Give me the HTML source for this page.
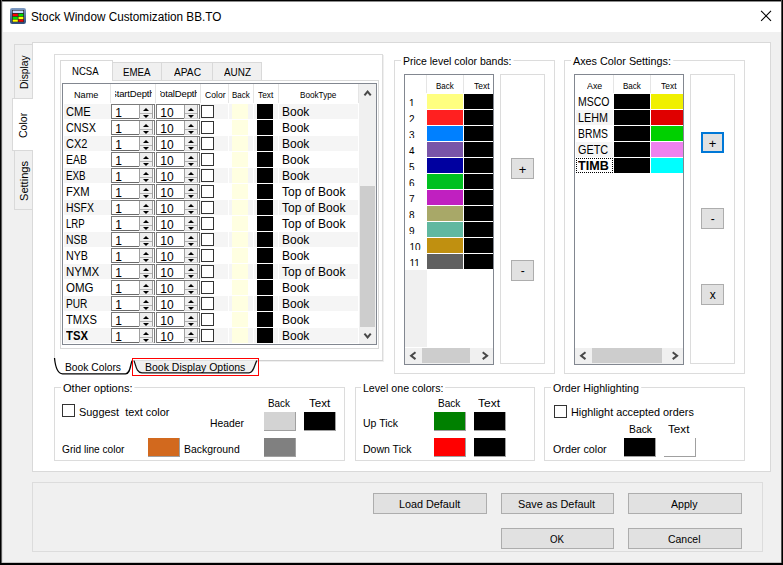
<!DOCTYPE html>
<html><head><meta charset="utf-8"><title>Stock Window Customization BB.TO</title>
<style>
html,body{margin:0;padding:0;}
body{width:783px;height:565px;position:relative;overflow:hidden;background:#f0f0f0;font-family:'Liberation Sans', sans-serif;}
body div, body svg{position:absolute;box-sizing:content-box;}
.t{white-space:pre;}
</style></head><body>
<div style="left:0px;top:0px;width:783px;height:565px;background:#f0f0f0;"></div>
<div style="left:0px;top:1px;width:783px;height:31px;background:#ffffff;"></div>
<div style="left:0px;top:0px;width:783px;height:1px;background:#000;"></div>
<div style="left:0px;top:1px;width:783px;height:1px;background:#8c8c8c;"></div>
<div style="left:0px;top:0px;width:1px;height:565px;background:#000;"></div>
<div style="left:1px;top:0px;width:1px;height:565px;background:#5c5c5c;"></div>
<div style="left:2px;top:2px;width:1px;height:561px;background:#dedede;"></div>
<div style="left:781px;top:0px;width:1px;height:565px;background:#555;"></div>
<div style="left:782px;top:0px;width:1px;height:565px;background:#000;"></div>
<div style="left:0px;top:563px;width:783px;height:2px;background:#000;"></div>
<div style="left:2px;top:562px;width:779px;height:1px;background:#c4c4c4;"></div>
<svg style="left:10px;top:8px" width="16" height="16" viewBox="0 0 16 16">
<defs><linearGradient id="ig" x1="0" y1="0" x2="0" y2="1"><stop offset="0" stop-color="#7f9cc4"/><stop offset="1" stop-color="#2f4f7d"/></linearGradient></defs>
<rect x="0" y="0" width="16" height="16" rx="2.2" fill="url(#ig)"/>
<rect x="2" y="2" width="12" height="12.2" fill="#26282e"/>
<rect x="2.7" y="2.6" width="10.6" height="2.4" fill="#c9d8ff"/>
<rect x="2.7" y="5.8" width="5.1" height="2.4" fill="#ff0000"/><rect x="8.5" y="5.8" width="4.8" height="2.4" fill="#00e000"/>
<rect x="2.7" y="8.8" width="5.1" height="2.4" fill="#00e000"/><rect x="8.5" y="8.8" width="4.8" height="2.4" fill="#ffff00"/>
<rect x="2.7" y="11.6" width="5.1" height="2.1" fill="#ffff00"/><rect x="8.5" y="11.6" width="4.8" height="2.1" fill="#f00000"/>
</svg>
<div class="t" style="left:31.20px;top:10px;font:12.5px/15px 'Liberation Sans', sans-serif;color:#000;white-space:pre;transform-origin:0 0;transform:scaleX(0.9397);">Stock Window Customization BB.TO</div>
<svg style="left:758px;top:8px" width="16" height="16" viewBox="0 0 16 16"><path d="M3.1 2.8 L13 12.9 M13 2.8 L3.1 12.9" stroke="#000" stroke-width="1.1" fill="none"/></svg>
<div style="left:32px;top:42px;width:737px;height:428px;border:1px solid #d9d9d9;background:#fff;"></div>
<div style="left:14px;top:44px;width:17px;height:54px;background:#f0f0f0;border:1px solid #d9d9d9;border-right:none;"></div>
<div style="left:14px;top:150px;width:17px;height:58px;background:#f0f0f0;border:1px solid #d9d9d9;border-right:none;"></div>
<div style="left:12px;top:98px;width:20px;height:51px;background:#fff;border:1px solid #d9d9d9;border-right:none;"></div>
<div class="t" style="left:27.8px;top:89px;transform-origin:0 0;transform:rotate(-90deg) translateY(-10.00px) scaleX(0.9285);font:11px/13px 'Liberation Sans', sans-serif;color:#000;white-space:pre;">Display</div>
<div class="t" style="left:27.2px;top:137.7px;transform-origin:0 0;transform:rotate(-90deg) translateY(-10.00px) scaleX(0.9583);font:11px/13px 'Liberation Sans', sans-serif;color:#000;white-space:pre;">Color</div>
<div class="t" style="left:27.8px;top:201px;transform-origin:0 0;transform:rotate(-90deg) translateY(-10.00px) scaleX(1.0063);font:11px/13px 'Liberation Sans', sans-serif;color:#000;white-space:pre;">Settings</div>
<div style="left:54px;top:54px;width:329px;height:1px;background:#dcdcdc;"></div>
<div style="left:54px;top:54px;width:1px;height:307px;background:#dcdcdc;"></div>
<div style="left:382px;top:54px;width:1px;height:307px;background:#dcdcdc;"></div>
<div style="left:133px;top:360px;width:250px;height:1px;background:#d0d0d0;"></div>
<div style="left:383px;top:55px;width:1px;height:306px;background:#efefef;"></div>
<div style="left:134px;top:361px;width:250px;height:1px;background:#efefef;"></div>
<div style="left:60px;top:80px;width:317px;height:267px;border:1px solid #d9d9d9;"></div>
<div style="left:112px;top:62px;width:49px;height:17px;background:#f0f0f0;border:1px solid #d9d9d9;border-bottom:none;border-left:none;"></div>
<div style="left:162px;top:62px;width:50px;height:17px;background:#f0f0f0;border:1px solid #d9d9d9;border-bottom:none;border-left:none;"></div>
<div style="left:213px;top:62px;width:48px;height:17px;background:#f0f0f0;border:1px solid #d9d9d9;border-bottom:none;border-left:none;"></div>
<div style="left:60px;top:60px;width:51px;height:20px;background:#fff;border:1px solid #d9d9d9;border-bottom:none;"></div>
<div class="t" style="left:71.60px;top:65px;font:11px/13px 'Liberation Sans', sans-serif;color:#000;white-space:pre;transform-origin:0 0;transform:scaleX(0.8703);">NCSA</div>
<div class="t" style="left:122.50px;top:66px;font:11px/13px 'Liberation Sans', sans-serif;color:#000;white-space:pre;transform-origin:0 0;transform:scaleX(0.8818);">EMEA</div>
<div class="t" style="left:173.50px;top:66px;font:11px/13px 'Liberation Sans', sans-serif;color:#000;white-space:pre;transform-origin:0 0;transform:scaleX(0.9265);">APAC</div>
<div class="t" style="left:224.00px;top:66px;font:11px/13px 'Liberation Sans', sans-serif;color:#000;white-space:pre;transform-origin:0 0;transform:scaleX(0.9014);">AUNZ</div>
<div style="left:62px;top:83px;width:313px;height:260px;border:1px solid #828790;background:#fff;"></div>
<div style="left:110px;top:84px;width:1px;height:19px;background:#e5e5e5;"></div>
<div style="left:155px;top:84px;width:1px;height:19px;background:#e5e5e5;"></div>
<div style="left:200px;top:84px;width:1px;height:19px;background:#e5e5e5;"></div>
<div style="left:228px;top:84px;width:1px;height:19px;background:#e5e5e5;"></div>
<div style="left:253px;top:84px;width:1px;height:19px;background:#e5e5e5;"></div>
<div style="left:278px;top:84px;width:1px;height:19px;background:#e5e5e5;"></div>
<div style="left:358px;top:84px;width:1px;height:19px;background:#e5e5e5;"></div>
<div style="left:64px;top:104px;width:294px;height:15px;background:#f5f5f5;"></div>
<div style="left:228px;top:104px;width:1px;height:15px;background:#fff;"></div>
<div style="left:253px;top:104px;width:1px;height:15px;background:#fff;"></div>
<div style="left:278px;top:104px;width:1px;height:15px;background:#fff;"></div>
<div class="t" style="left:66.20px;top:105px;font:12px/14px 'Liberation Sans', sans-serif;color:#000;white-space:pre;transform-origin:0 0;transform:scaleX(0.9261);">CME</div>
<div style="left:111px;top:104px;width:44px;height:15px;background:#fff;"></div>
<div style="left:111px;top:104px;width:44px;height:1px;background:#7a7a7a;"></div>
<div style="left:111px;top:104px;width:1px;height:15px;background:#7a7a7a;"></div>
<div style="left:154px;top:104px;width:1px;height:15px;background:#7a7a7a;"></div>
<div style="left:112px;top:118px;width:27px;height:1px;background:#6a6a6a;"></div>
<div style="left:139px;top:118px;width:15px;height:1px;background:#d4d4d4;"></div>
<div style="left:139px;top:105px;width:12px;height:13px;background:#efefef;border:none;border-left:1px solid #a0a0a0;border-right:1px solid #a0a0a0;"></div>
<div style="left:140px;top:113px;width:12px;height:1px;background:#b4b4b4;"></div>
<div style="left:143px;top:108px;width:0;height:0;border-left:3px solid transparent;border-right:3px solid transparent;border-bottom:3px solid #000;"></div>
<div style="left:143px;top:115px;width:0;height:0;border-left:3px solid transparent;border-right:3px solid transparent;border-top:3px solid #000;"></div>
<div class="t" style="left:115.30px;top:106px;font:12px/14px 'Liberation Sans', sans-serif;color:#000;white-space:pre;">1</div>
<div style="left:156px;top:104px;width:44px;height:15px;background:#fff;"></div>
<div style="left:156px;top:104px;width:44px;height:1px;background:#7a7a7a;"></div>
<div style="left:156px;top:104px;width:1px;height:15px;background:#7a7a7a;"></div>
<div style="left:199px;top:104px;width:1px;height:15px;background:#7a7a7a;"></div>
<div style="left:157px;top:118px;width:27px;height:1px;background:#6a6a6a;"></div>
<div style="left:184px;top:118px;width:15px;height:1px;background:#d4d4d4;"></div>
<div style="left:184px;top:105px;width:12px;height:13px;background:#efefef;border:none;border-left:1px solid #a0a0a0;border-right:1px solid #a0a0a0;"></div>
<div style="left:185px;top:113px;width:12px;height:1px;background:#b4b4b4;"></div>
<div style="left:188px;top:108px;width:0;height:0;border-left:3px solid transparent;border-right:3px solid transparent;border-bottom:3px solid #000;"></div>
<div style="left:188px;top:115px;width:0;height:0;border-left:3px solid transparent;border-right:3px solid transparent;border-top:3px solid #000;"></div>
<div class="t" style="left:160.30px;top:106px;font:12px/14px 'Liberation Sans', sans-serif;color:#000;white-space:pre;">10</div>
<div style="left:201px;top:105px;width:11px;height:11px;background:#fff;border:1px solid #333;"></div>
<div style="left:232px;top:104px;width:16px;height:15px;background:#ffffe1;"></div>
<div style="left:257px;top:104px;width:16px;height:15px;background:#000;"></div>
<div class="t" style="left:282.00px;top:105px;font:12px/14px 'Liberation Sans', sans-serif;color:#000;white-space:pre;">Book</div>
<div class="t" style="left:66.20px;top:121px;font:12px/14px 'Liberation Sans', sans-serif;color:#000;white-space:pre;transform-origin:0 0;transform:scaleX(0.8967);">CNSX</div>
<div style="left:111px;top:120px;width:44px;height:15px;background:#fff;"></div>
<div style="left:111px;top:120px;width:44px;height:1px;background:#7a7a7a;"></div>
<div style="left:111px;top:120px;width:1px;height:15px;background:#7a7a7a;"></div>
<div style="left:154px;top:120px;width:1px;height:15px;background:#7a7a7a;"></div>
<div style="left:112px;top:134px;width:27px;height:1px;background:#6a6a6a;"></div>
<div style="left:139px;top:134px;width:15px;height:1px;background:#d4d4d4;"></div>
<div style="left:139px;top:121px;width:12px;height:13px;background:#efefef;border:none;border-left:1px solid #a0a0a0;border-right:1px solid #a0a0a0;"></div>
<div style="left:140px;top:129px;width:12px;height:1px;background:#b4b4b4;"></div>
<div style="left:143px;top:124px;width:0;height:0;border-left:3px solid transparent;border-right:3px solid transparent;border-bottom:3px solid #000;"></div>
<div style="left:143px;top:131px;width:0;height:0;border-left:3px solid transparent;border-right:3px solid transparent;border-top:3px solid #000;"></div>
<div class="t" style="left:115.30px;top:122px;font:12px/14px 'Liberation Sans', sans-serif;color:#000;white-space:pre;">1</div>
<div style="left:156px;top:120px;width:44px;height:15px;background:#fff;"></div>
<div style="left:156px;top:120px;width:44px;height:1px;background:#7a7a7a;"></div>
<div style="left:156px;top:120px;width:1px;height:15px;background:#7a7a7a;"></div>
<div style="left:199px;top:120px;width:1px;height:15px;background:#7a7a7a;"></div>
<div style="left:157px;top:134px;width:27px;height:1px;background:#6a6a6a;"></div>
<div style="left:184px;top:134px;width:15px;height:1px;background:#d4d4d4;"></div>
<div style="left:184px;top:121px;width:12px;height:13px;background:#efefef;border:none;border-left:1px solid #a0a0a0;border-right:1px solid #a0a0a0;"></div>
<div style="left:185px;top:129px;width:12px;height:1px;background:#b4b4b4;"></div>
<div style="left:188px;top:124px;width:0;height:0;border-left:3px solid transparent;border-right:3px solid transparent;border-bottom:3px solid #000;"></div>
<div style="left:188px;top:131px;width:0;height:0;border-left:3px solid transparent;border-right:3px solid transparent;border-top:3px solid #000;"></div>
<div class="t" style="left:160.30px;top:122px;font:12px/14px 'Liberation Sans', sans-serif;color:#000;white-space:pre;">10</div>
<div style="left:201px;top:121px;width:11px;height:11px;background:#fff;border:1px solid #333;"></div>
<div style="left:232px;top:120px;width:16px;height:15px;background:#ffffe1;"></div>
<div style="left:257px;top:120px;width:16px;height:15px;background:#000;"></div>
<div class="t" style="left:282.00px;top:121px;font:12px/14px 'Liberation Sans', sans-serif;color:#000;white-space:pre;">Book</div>
<div style="left:64px;top:136px;width:294px;height:15px;background:#f5f5f5;"></div>
<div style="left:228px;top:136px;width:1px;height:15px;background:#fff;"></div>
<div style="left:253px;top:136px;width:1px;height:15px;background:#fff;"></div>
<div style="left:278px;top:136px;width:1px;height:15px;background:#fff;"></div>
<div class="t" style="left:66.20px;top:137px;font:12px/14px 'Liberation Sans', sans-serif;color:#000;white-space:pre;transform-origin:0 0;transform:scaleX(0.9167);">CX2</div>
<div style="left:111px;top:136px;width:44px;height:15px;background:#fff;"></div>
<div style="left:111px;top:136px;width:44px;height:1px;background:#7a7a7a;"></div>
<div style="left:111px;top:136px;width:1px;height:15px;background:#7a7a7a;"></div>
<div style="left:154px;top:136px;width:1px;height:15px;background:#7a7a7a;"></div>
<div style="left:112px;top:150px;width:27px;height:1px;background:#6a6a6a;"></div>
<div style="left:139px;top:150px;width:15px;height:1px;background:#d4d4d4;"></div>
<div style="left:139px;top:137px;width:12px;height:13px;background:#efefef;border:none;border-left:1px solid #a0a0a0;border-right:1px solid #a0a0a0;"></div>
<div style="left:140px;top:145px;width:12px;height:1px;background:#b4b4b4;"></div>
<div style="left:143px;top:140px;width:0;height:0;border-left:3px solid transparent;border-right:3px solid transparent;border-bottom:3px solid #000;"></div>
<div style="left:143px;top:147px;width:0;height:0;border-left:3px solid transparent;border-right:3px solid transparent;border-top:3px solid #000;"></div>
<div class="t" style="left:115.30px;top:138px;font:12px/14px 'Liberation Sans', sans-serif;color:#000;white-space:pre;">1</div>
<div style="left:156px;top:136px;width:44px;height:15px;background:#fff;"></div>
<div style="left:156px;top:136px;width:44px;height:1px;background:#7a7a7a;"></div>
<div style="left:156px;top:136px;width:1px;height:15px;background:#7a7a7a;"></div>
<div style="left:199px;top:136px;width:1px;height:15px;background:#7a7a7a;"></div>
<div style="left:157px;top:150px;width:27px;height:1px;background:#6a6a6a;"></div>
<div style="left:184px;top:150px;width:15px;height:1px;background:#d4d4d4;"></div>
<div style="left:184px;top:137px;width:12px;height:13px;background:#efefef;border:none;border-left:1px solid #a0a0a0;border-right:1px solid #a0a0a0;"></div>
<div style="left:185px;top:145px;width:12px;height:1px;background:#b4b4b4;"></div>
<div style="left:188px;top:140px;width:0;height:0;border-left:3px solid transparent;border-right:3px solid transparent;border-bottom:3px solid #000;"></div>
<div style="left:188px;top:147px;width:0;height:0;border-left:3px solid transparent;border-right:3px solid transparent;border-top:3px solid #000;"></div>
<div class="t" style="left:160.30px;top:138px;font:12px/14px 'Liberation Sans', sans-serif;color:#000;white-space:pre;">10</div>
<div style="left:201px;top:137px;width:11px;height:11px;background:#fff;border:1px solid #333;"></div>
<div style="left:232px;top:136px;width:16px;height:15px;background:#ffffe1;"></div>
<div style="left:257px;top:136px;width:16px;height:15px;background:#000;"></div>
<div class="t" style="left:282.00px;top:137px;font:12px/14px 'Liberation Sans', sans-serif;color:#000;white-space:pre;">Book</div>
<div class="t" style="left:66.20px;top:153px;font:12px/14px 'Liberation Sans', sans-serif;color:#000;white-space:pre;transform-origin:0 0;transform:scaleX(0.8744);">EAB</div>
<div style="left:111px;top:152px;width:44px;height:15px;background:#fff;"></div>
<div style="left:111px;top:152px;width:44px;height:1px;background:#7a7a7a;"></div>
<div style="left:111px;top:152px;width:1px;height:15px;background:#7a7a7a;"></div>
<div style="left:154px;top:152px;width:1px;height:15px;background:#7a7a7a;"></div>
<div style="left:112px;top:166px;width:27px;height:1px;background:#6a6a6a;"></div>
<div style="left:139px;top:166px;width:15px;height:1px;background:#d4d4d4;"></div>
<div style="left:139px;top:153px;width:12px;height:13px;background:#efefef;border:none;border-left:1px solid #a0a0a0;border-right:1px solid #a0a0a0;"></div>
<div style="left:140px;top:161px;width:12px;height:1px;background:#b4b4b4;"></div>
<div style="left:143px;top:156px;width:0;height:0;border-left:3px solid transparent;border-right:3px solid transparent;border-bottom:3px solid #000;"></div>
<div style="left:143px;top:163px;width:0;height:0;border-left:3px solid transparent;border-right:3px solid transparent;border-top:3px solid #000;"></div>
<div class="t" style="left:115.30px;top:154px;font:12px/14px 'Liberation Sans', sans-serif;color:#000;white-space:pre;">1</div>
<div style="left:156px;top:152px;width:44px;height:15px;background:#fff;"></div>
<div style="left:156px;top:152px;width:44px;height:1px;background:#7a7a7a;"></div>
<div style="left:156px;top:152px;width:1px;height:15px;background:#7a7a7a;"></div>
<div style="left:199px;top:152px;width:1px;height:15px;background:#7a7a7a;"></div>
<div style="left:157px;top:166px;width:27px;height:1px;background:#6a6a6a;"></div>
<div style="left:184px;top:166px;width:15px;height:1px;background:#d4d4d4;"></div>
<div style="left:184px;top:153px;width:12px;height:13px;background:#efefef;border:none;border-left:1px solid #a0a0a0;border-right:1px solid #a0a0a0;"></div>
<div style="left:185px;top:161px;width:12px;height:1px;background:#b4b4b4;"></div>
<div style="left:188px;top:156px;width:0;height:0;border-left:3px solid transparent;border-right:3px solid transparent;border-bottom:3px solid #000;"></div>
<div style="left:188px;top:163px;width:0;height:0;border-left:3px solid transparent;border-right:3px solid transparent;border-top:3px solid #000;"></div>
<div class="t" style="left:160.30px;top:154px;font:12px/14px 'Liberation Sans', sans-serif;color:#000;white-space:pre;">10</div>
<div style="left:201px;top:153px;width:11px;height:11px;background:#fff;border:1px solid #333;"></div>
<div style="left:232px;top:152px;width:16px;height:15px;background:#ffffe1;"></div>
<div style="left:257px;top:152px;width:16px;height:15px;background:#000;"></div>
<div class="t" style="left:282.00px;top:153px;font:12px/14px 'Liberation Sans', sans-serif;color:#000;white-space:pre;">Book</div>
<div style="left:64px;top:168px;width:294px;height:15px;background:#f5f5f5;"></div>
<div style="left:228px;top:168px;width:1px;height:15px;background:#fff;"></div>
<div style="left:253px;top:168px;width:1px;height:15px;background:#fff;"></div>
<div style="left:278px;top:168px;width:1px;height:15px;background:#fff;"></div>
<div class="t" style="left:66.20px;top:169px;font:12px/14px 'Liberation Sans', sans-serif;color:#000;white-space:pre;transform-origin:0 0;transform:scaleX(0.8161);">EXB</div>
<div style="left:111px;top:168px;width:44px;height:15px;background:#fff;"></div>
<div style="left:111px;top:168px;width:44px;height:1px;background:#7a7a7a;"></div>
<div style="left:111px;top:168px;width:1px;height:15px;background:#7a7a7a;"></div>
<div style="left:154px;top:168px;width:1px;height:15px;background:#7a7a7a;"></div>
<div style="left:112px;top:182px;width:27px;height:1px;background:#6a6a6a;"></div>
<div style="left:139px;top:182px;width:15px;height:1px;background:#d4d4d4;"></div>
<div style="left:139px;top:169px;width:12px;height:13px;background:#efefef;border:none;border-left:1px solid #a0a0a0;border-right:1px solid #a0a0a0;"></div>
<div style="left:140px;top:177px;width:12px;height:1px;background:#b4b4b4;"></div>
<div style="left:143px;top:172px;width:0;height:0;border-left:3px solid transparent;border-right:3px solid transparent;border-bottom:3px solid #000;"></div>
<div style="left:143px;top:179px;width:0;height:0;border-left:3px solid transparent;border-right:3px solid transparent;border-top:3px solid #000;"></div>
<div class="t" style="left:115.30px;top:170px;font:12px/14px 'Liberation Sans', sans-serif;color:#000;white-space:pre;">1</div>
<div style="left:156px;top:168px;width:44px;height:15px;background:#fff;"></div>
<div style="left:156px;top:168px;width:44px;height:1px;background:#7a7a7a;"></div>
<div style="left:156px;top:168px;width:1px;height:15px;background:#7a7a7a;"></div>
<div style="left:199px;top:168px;width:1px;height:15px;background:#7a7a7a;"></div>
<div style="left:157px;top:182px;width:27px;height:1px;background:#6a6a6a;"></div>
<div style="left:184px;top:182px;width:15px;height:1px;background:#d4d4d4;"></div>
<div style="left:184px;top:169px;width:12px;height:13px;background:#efefef;border:none;border-left:1px solid #a0a0a0;border-right:1px solid #a0a0a0;"></div>
<div style="left:185px;top:177px;width:12px;height:1px;background:#b4b4b4;"></div>
<div style="left:188px;top:172px;width:0;height:0;border-left:3px solid transparent;border-right:3px solid transparent;border-bottom:3px solid #000;"></div>
<div style="left:188px;top:179px;width:0;height:0;border-left:3px solid transparent;border-right:3px solid transparent;border-top:3px solid #000;"></div>
<div class="t" style="left:160.30px;top:170px;font:12px/14px 'Liberation Sans', sans-serif;color:#000;white-space:pre;">10</div>
<div style="left:201px;top:169px;width:11px;height:11px;background:#fff;border:1px solid #333;"></div>
<div style="left:232px;top:168px;width:16px;height:15px;background:#ffffe1;"></div>
<div style="left:257px;top:168px;width:16px;height:15px;background:#000;"></div>
<div class="t" style="left:282.00px;top:169px;font:12px/14px 'Liberation Sans', sans-serif;color:#000;white-space:pre;">Book</div>
<div class="t" style="left:66.20px;top:185px;font:12px/14px 'Liberation Sans', sans-serif;color:#000;white-space:pre;transform-origin:0 0;transform:scaleX(0.9351);">FXM</div>
<div style="left:111px;top:184px;width:44px;height:15px;background:#fff;"></div>
<div style="left:111px;top:184px;width:44px;height:1px;background:#7a7a7a;"></div>
<div style="left:111px;top:184px;width:1px;height:15px;background:#7a7a7a;"></div>
<div style="left:154px;top:184px;width:1px;height:15px;background:#7a7a7a;"></div>
<div style="left:112px;top:198px;width:27px;height:1px;background:#6a6a6a;"></div>
<div style="left:139px;top:198px;width:15px;height:1px;background:#d4d4d4;"></div>
<div style="left:139px;top:185px;width:12px;height:13px;background:#efefef;border:none;border-left:1px solid #a0a0a0;border-right:1px solid #a0a0a0;"></div>
<div style="left:140px;top:193px;width:12px;height:1px;background:#b4b4b4;"></div>
<div style="left:143px;top:188px;width:0;height:0;border-left:3px solid transparent;border-right:3px solid transparent;border-bottom:3px solid #000;"></div>
<div style="left:143px;top:195px;width:0;height:0;border-left:3px solid transparent;border-right:3px solid transparent;border-top:3px solid #000;"></div>
<div class="t" style="left:115.30px;top:186px;font:12px/14px 'Liberation Sans', sans-serif;color:#000;white-space:pre;">1</div>
<div style="left:156px;top:184px;width:44px;height:15px;background:#fff;"></div>
<div style="left:156px;top:184px;width:44px;height:1px;background:#7a7a7a;"></div>
<div style="left:156px;top:184px;width:1px;height:15px;background:#7a7a7a;"></div>
<div style="left:199px;top:184px;width:1px;height:15px;background:#7a7a7a;"></div>
<div style="left:157px;top:198px;width:27px;height:1px;background:#6a6a6a;"></div>
<div style="left:184px;top:198px;width:15px;height:1px;background:#d4d4d4;"></div>
<div style="left:184px;top:185px;width:12px;height:13px;background:#efefef;border:none;border-left:1px solid #a0a0a0;border-right:1px solid #a0a0a0;"></div>
<div style="left:185px;top:193px;width:12px;height:1px;background:#b4b4b4;"></div>
<div style="left:188px;top:188px;width:0;height:0;border-left:3px solid transparent;border-right:3px solid transparent;border-bottom:3px solid #000;"></div>
<div style="left:188px;top:195px;width:0;height:0;border-left:3px solid transparent;border-right:3px solid transparent;border-top:3px solid #000;"></div>
<div class="t" style="left:160.30px;top:186px;font:12px/14px 'Liberation Sans', sans-serif;color:#000;white-space:pre;">10</div>
<div style="left:201px;top:185px;width:11px;height:11px;background:#fff;border:1px solid #333;"></div>
<div style="left:232px;top:184px;width:16px;height:15px;background:#ffffe1;"></div>
<div style="left:257px;top:184px;width:16px;height:15px;background:#000;"></div>
<div class="t" style="left:282.00px;top:185px;font:12px/14px 'Liberation Sans', sans-serif;color:#000;white-space:pre;">Top of Book</div>
<div style="left:64px;top:200px;width:294px;height:15px;background:#f5f5f5;"></div>
<div style="left:228px;top:200px;width:1px;height:15px;background:#fff;"></div>
<div style="left:253px;top:200px;width:1px;height:15px;background:#fff;"></div>
<div style="left:278px;top:200px;width:1px;height:15px;background:#fff;"></div>
<div class="t" style="left:66.20px;top:201px;font:12px/14px 'Liberation Sans', sans-serif;color:#000;white-space:pre;transform-origin:0 0;transform:scaleX(0.8714);">HSFX</div>
<div style="left:111px;top:200px;width:44px;height:15px;background:#fff;"></div>
<div style="left:111px;top:200px;width:44px;height:1px;background:#7a7a7a;"></div>
<div style="left:111px;top:200px;width:1px;height:15px;background:#7a7a7a;"></div>
<div style="left:154px;top:200px;width:1px;height:15px;background:#7a7a7a;"></div>
<div style="left:112px;top:214px;width:27px;height:1px;background:#6a6a6a;"></div>
<div style="left:139px;top:214px;width:15px;height:1px;background:#d4d4d4;"></div>
<div style="left:139px;top:201px;width:12px;height:13px;background:#efefef;border:none;border-left:1px solid #a0a0a0;border-right:1px solid #a0a0a0;"></div>
<div style="left:140px;top:209px;width:12px;height:1px;background:#b4b4b4;"></div>
<div style="left:143px;top:204px;width:0;height:0;border-left:3px solid transparent;border-right:3px solid transparent;border-bottom:3px solid #000;"></div>
<div style="left:143px;top:211px;width:0;height:0;border-left:3px solid transparent;border-right:3px solid transparent;border-top:3px solid #000;"></div>
<div class="t" style="left:115.30px;top:202px;font:12px/14px 'Liberation Sans', sans-serif;color:#000;white-space:pre;">1</div>
<div style="left:156px;top:200px;width:44px;height:15px;background:#fff;"></div>
<div style="left:156px;top:200px;width:44px;height:1px;background:#7a7a7a;"></div>
<div style="left:156px;top:200px;width:1px;height:15px;background:#7a7a7a;"></div>
<div style="left:199px;top:200px;width:1px;height:15px;background:#7a7a7a;"></div>
<div style="left:157px;top:214px;width:27px;height:1px;background:#6a6a6a;"></div>
<div style="left:184px;top:214px;width:15px;height:1px;background:#d4d4d4;"></div>
<div style="left:184px;top:201px;width:12px;height:13px;background:#efefef;border:none;border-left:1px solid #a0a0a0;border-right:1px solid #a0a0a0;"></div>
<div style="left:185px;top:209px;width:12px;height:1px;background:#b4b4b4;"></div>
<div style="left:188px;top:204px;width:0;height:0;border-left:3px solid transparent;border-right:3px solid transparent;border-bottom:3px solid #000;"></div>
<div style="left:188px;top:211px;width:0;height:0;border-left:3px solid transparent;border-right:3px solid transparent;border-top:3px solid #000;"></div>
<div class="t" style="left:160.30px;top:202px;font:12px/14px 'Liberation Sans', sans-serif;color:#000;white-space:pre;">10</div>
<div style="left:201px;top:201px;width:11px;height:11px;background:#fff;border:1px solid #333;"></div>
<div style="left:232px;top:200px;width:16px;height:15px;background:#ffffe1;"></div>
<div style="left:257px;top:200px;width:16px;height:15px;background:#000;"></div>
<div class="t" style="left:282.00px;top:201px;font:12px/14px 'Liberation Sans', sans-serif;color:#000;white-space:pre;">Top of Book</div>
<div class="t" style="left:66.20px;top:217px;font:12px/14px 'Liberation Sans', sans-serif;color:#000;white-space:pre;transform-origin:0 0;transform:scaleX(0.8011);">LRP</div>
<div style="left:111px;top:216px;width:44px;height:15px;background:#fff;"></div>
<div style="left:111px;top:216px;width:44px;height:1px;background:#7a7a7a;"></div>
<div style="left:111px;top:216px;width:1px;height:15px;background:#7a7a7a;"></div>
<div style="left:154px;top:216px;width:1px;height:15px;background:#7a7a7a;"></div>
<div style="left:112px;top:230px;width:27px;height:1px;background:#6a6a6a;"></div>
<div style="left:139px;top:230px;width:15px;height:1px;background:#d4d4d4;"></div>
<div style="left:139px;top:217px;width:12px;height:13px;background:#efefef;border:none;border-left:1px solid #a0a0a0;border-right:1px solid #a0a0a0;"></div>
<div style="left:140px;top:225px;width:12px;height:1px;background:#b4b4b4;"></div>
<div style="left:143px;top:220px;width:0;height:0;border-left:3px solid transparent;border-right:3px solid transparent;border-bottom:3px solid #000;"></div>
<div style="left:143px;top:227px;width:0;height:0;border-left:3px solid transparent;border-right:3px solid transparent;border-top:3px solid #000;"></div>
<div class="t" style="left:115.30px;top:218px;font:12px/14px 'Liberation Sans', sans-serif;color:#000;white-space:pre;">1</div>
<div style="left:156px;top:216px;width:44px;height:15px;background:#fff;"></div>
<div style="left:156px;top:216px;width:44px;height:1px;background:#7a7a7a;"></div>
<div style="left:156px;top:216px;width:1px;height:15px;background:#7a7a7a;"></div>
<div style="left:199px;top:216px;width:1px;height:15px;background:#7a7a7a;"></div>
<div style="left:157px;top:230px;width:27px;height:1px;background:#6a6a6a;"></div>
<div style="left:184px;top:230px;width:15px;height:1px;background:#d4d4d4;"></div>
<div style="left:184px;top:217px;width:12px;height:13px;background:#efefef;border:none;border-left:1px solid #a0a0a0;border-right:1px solid #a0a0a0;"></div>
<div style="left:185px;top:225px;width:12px;height:1px;background:#b4b4b4;"></div>
<div style="left:188px;top:220px;width:0;height:0;border-left:3px solid transparent;border-right:3px solid transparent;border-bottom:3px solid #000;"></div>
<div style="left:188px;top:227px;width:0;height:0;border-left:3px solid transparent;border-right:3px solid transparent;border-top:3px solid #000;"></div>
<div class="t" style="left:160.30px;top:218px;font:12px/14px 'Liberation Sans', sans-serif;color:#000;white-space:pre;">10</div>
<div style="left:201px;top:217px;width:11px;height:11px;background:#fff;border:1px solid #333;"></div>
<div style="left:232px;top:216px;width:16px;height:15px;background:#ffffe1;"></div>
<div style="left:257px;top:216px;width:16px;height:15px;background:#000;"></div>
<div class="t" style="left:282.00px;top:217px;font:12px/14px 'Liberation Sans', sans-serif;color:#000;white-space:pre;">Top of Book</div>
<div style="left:64px;top:232px;width:294px;height:15px;background:#f5f5f5;"></div>
<div style="left:228px;top:232px;width:1px;height:15px;background:#fff;"></div>
<div style="left:253px;top:232px;width:1px;height:15px;background:#fff;"></div>
<div style="left:278px;top:232px;width:1px;height:15px;background:#fff;"></div>
<div class="t" style="left:66.20px;top:233px;font:12px/14px 'Liberation Sans', sans-serif;color:#000;white-space:pre;transform-origin:0 0;transform:scaleX(0.8668);">NSB</div>
<div style="left:111px;top:232px;width:44px;height:15px;background:#fff;"></div>
<div style="left:111px;top:232px;width:44px;height:1px;background:#7a7a7a;"></div>
<div style="left:111px;top:232px;width:1px;height:15px;background:#7a7a7a;"></div>
<div style="left:154px;top:232px;width:1px;height:15px;background:#7a7a7a;"></div>
<div style="left:112px;top:246px;width:27px;height:1px;background:#6a6a6a;"></div>
<div style="left:139px;top:246px;width:15px;height:1px;background:#d4d4d4;"></div>
<div style="left:139px;top:233px;width:12px;height:13px;background:#efefef;border:none;border-left:1px solid #a0a0a0;border-right:1px solid #a0a0a0;"></div>
<div style="left:140px;top:241px;width:12px;height:1px;background:#b4b4b4;"></div>
<div style="left:143px;top:236px;width:0;height:0;border-left:3px solid transparent;border-right:3px solid transparent;border-bottom:3px solid #000;"></div>
<div style="left:143px;top:243px;width:0;height:0;border-left:3px solid transparent;border-right:3px solid transparent;border-top:3px solid #000;"></div>
<div class="t" style="left:115.30px;top:234px;font:12px/14px 'Liberation Sans', sans-serif;color:#000;white-space:pre;">1</div>
<div style="left:156px;top:232px;width:44px;height:15px;background:#fff;"></div>
<div style="left:156px;top:232px;width:44px;height:1px;background:#7a7a7a;"></div>
<div style="left:156px;top:232px;width:1px;height:15px;background:#7a7a7a;"></div>
<div style="left:199px;top:232px;width:1px;height:15px;background:#7a7a7a;"></div>
<div style="left:157px;top:246px;width:27px;height:1px;background:#6a6a6a;"></div>
<div style="left:184px;top:246px;width:15px;height:1px;background:#d4d4d4;"></div>
<div style="left:184px;top:233px;width:12px;height:13px;background:#efefef;border:none;border-left:1px solid #a0a0a0;border-right:1px solid #a0a0a0;"></div>
<div style="left:185px;top:241px;width:12px;height:1px;background:#b4b4b4;"></div>
<div style="left:188px;top:236px;width:0;height:0;border-left:3px solid transparent;border-right:3px solid transparent;border-bottom:3px solid #000;"></div>
<div style="left:188px;top:243px;width:0;height:0;border-left:3px solid transparent;border-right:3px solid transparent;border-top:3px solid #000;"></div>
<div class="t" style="left:160.30px;top:234px;font:12px/14px 'Liberation Sans', sans-serif;color:#000;white-space:pre;">10</div>
<div style="left:201px;top:233px;width:11px;height:11px;background:#fff;border:1px solid #333;"></div>
<div style="left:232px;top:232px;width:16px;height:15px;background:#ffffe1;"></div>
<div style="left:257px;top:232px;width:16px;height:15px;background:#000;"></div>
<div class="t" style="left:282.00px;top:233px;font:12px/14px 'Liberation Sans', sans-serif;color:#000;white-space:pre;">Book</div>
<div class="t" style="left:66.20px;top:249px;font:12px/14px 'Liberation Sans', sans-serif;color:#000;white-space:pre;transform-origin:0 0;transform:scaleX(0.8911);">NYB</div>
<div style="left:111px;top:248px;width:44px;height:15px;background:#fff;"></div>
<div style="left:111px;top:248px;width:44px;height:1px;background:#7a7a7a;"></div>
<div style="left:111px;top:248px;width:1px;height:15px;background:#7a7a7a;"></div>
<div style="left:154px;top:248px;width:1px;height:15px;background:#7a7a7a;"></div>
<div style="left:112px;top:262px;width:27px;height:1px;background:#6a6a6a;"></div>
<div style="left:139px;top:262px;width:15px;height:1px;background:#d4d4d4;"></div>
<div style="left:139px;top:249px;width:12px;height:13px;background:#efefef;border:none;border-left:1px solid #a0a0a0;border-right:1px solid #a0a0a0;"></div>
<div style="left:140px;top:257px;width:12px;height:1px;background:#b4b4b4;"></div>
<div style="left:143px;top:252px;width:0;height:0;border-left:3px solid transparent;border-right:3px solid transparent;border-bottom:3px solid #000;"></div>
<div style="left:143px;top:259px;width:0;height:0;border-left:3px solid transparent;border-right:3px solid transparent;border-top:3px solid #000;"></div>
<div class="t" style="left:115.30px;top:250px;font:12px/14px 'Liberation Sans', sans-serif;color:#000;white-space:pre;">1</div>
<div style="left:156px;top:248px;width:44px;height:15px;background:#fff;"></div>
<div style="left:156px;top:248px;width:44px;height:1px;background:#7a7a7a;"></div>
<div style="left:156px;top:248px;width:1px;height:15px;background:#7a7a7a;"></div>
<div style="left:199px;top:248px;width:1px;height:15px;background:#7a7a7a;"></div>
<div style="left:157px;top:262px;width:27px;height:1px;background:#6a6a6a;"></div>
<div style="left:184px;top:262px;width:15px;height:1px;background:#d4d4d4;"></div>
<div style="left:184px;top:249px;width:12px;height:13px;background:#efefef;border:none;border-left:1px solid #a0a0a0;border-right:1px solid #a0a0a0;"></div>
<div style="left:185px;top:257px;width:12px;height:1px;background:#b4b4b4;"></div>
<div style="left:188px;top:252px;width:0;height:0;border-left:3px solid transparent;border-right:3px solid transparent;border-bottom:3px solid #000;"></div>
<div style="left:188px;top:259px;width:0;height:0;border-left:3px solid transparent;border-right:3px solid transparent;border-top:3px solid #000;"></div>
<div class="t" style="left:160.30px;top:250px;font:12px/14px 'Liberation Sans', sans-serif;color:#000;white-space:pre;">10</div>
<div style="left:201px;top:249px;width:11px;height:11px;background:#fff;border:1px solid #333;"></div>
<div style="left:232px;top:248px;width:16px;height:15px;background:#ffffe1;"></div>
<div style="left:257px;top:248px;width:16px;height:15px;background:#000;"></div>
<div class="t" style="left:282.00px;top:249px;font:12px/14px 'Liberation Sans', sans-serif;color:#000;white-space:pre;">Book</div>
<div style="left:64px;top:264px;width:294px;height:15px;background:#f5f5f5;"></div>
<div style="left:228px;top:264px;width:1px;height:15px;background:#fff;"></div>
<div style="left:253px;top:264px;width:1px;height:15px;background:#fff;"></div>
<div style="left:278px;top:264px;width:1px;height:15px;background:#fff;"></div>
<div class="t" style="left:66.20px;top:265px;font:12px/14px 'Liberation Sans', sans-serif;color:#000;white-space:pre;transform-origin:0 0;transform:scaleX(0.9547);">NYMX</div>
<div style="left:111px;top:264px;width:44px;height:15px;background:#fff;"></div>
<div style="left:111px;top:264px;width:44px;height:1px;background:#7a7a7a;"></div>
<div style="left:111px;top:264px;width:1px;height:15px;background:#7a7a7a;"></div>
<div style="left:154px;top:264px;width:1px;height:15px;background:#7a7a7a;"></div>
<div style="left:112px;top:278px;width:27px;height:1px;background:#6a6a6a;"></div>
<div style="left:139px;top:278px;width:15px;height:1px;background:#d4d4d4;"></div>
<div style="left:139px;top:265px;width:12px;height:13px;background:#efefef;border:none;border-left:1px solid #a0a0a0;border-right:1px solid #a0a0a0;"></div>
<div style="left:140px;top:273px;width:12px;height:1px;background:#b4b4b4;"></div>
<div style="left:143px;top:268px;width:0;height:0;border-left:3px solid transparent;border-right:3px solid transparent;border-bottom:3px solid #000;"></div>
<div style="left:143px;top:275px;width:0;height:0;border-left:3px solid transparent;border-right:3px solid transparent;border-top:3px solid #000;"></div>
<div class="t" style="left:115.30px;top:266px;font:12px/14px 'Liberation Sans', sans-serif;color:#000;white-space:pre;">1</div>
<div style="left:156px;top:264px;width:44px;height:15px;background:#fff;"></div>
<div style="left:156px;top:264px;width:44px;height:1px;background:#7a7a7a;"></div>
<div style="left:156px;top:264px;width:1px;height:15px;background:#7a7a7a;"></div>
<div style="left:199px;top:264px;width:1px;height:15px;background:#7a7a7a;"></div>
<div style="left:157px;top:278px;width:27px;height:1px;background:#6a6a6a;"></div>
<div style="left:184px;top:278px;width:15px;height:1px;background:#d4d4d4;"></div>
<div style="left:184px;top:265px;width:12px;height:13px;background:#efefef;border:none;border-left:1px solid #a0a0a0;border-right:1px solid #a0a0a0;"></div>
<div style="left:185px;top:273px;width:12px;height:1px;background:#b4b4b4;"></div>
<div style="left:188px;top:268px;width:0;height:0;border-left:3px solid transparent;border-right:3px solid transparent;border-bottom:3px solid #000;"></div>
<div style="left:188px;top:275px;width:0;height:0;border-left:3px solid transparent;border-right:3px solid transparent;border-top:3px solid #000;"></div>
<div class="t" style="left:160.30px;top:266px;font:12px/14px 'Liberation Sans', sans-serif;color:#000;white-space:pre;">10</div>
<div style="left:201px;top:265px;width:11px;height:11px;background:#fff;border:1px solid #333;"></div>
<div style="left:232px;top:264px;width:16px;height:15px;background:#ffffe1;"></div>
<div style="left:257px;top:264px;width:16px;height:15px;background:#000;"></div>
<div class="t" style="left:282.00px;top:265px;font:12px/14px 'Liberation Sans', sans-serif;color:#000;white-space:pre;">Top of Book</div>
<div class="t" style="left:66.20px;top:281px;font:12px/14px 'Liberation Sans', sans-serif;color:#000;white-space:pre;transform-origin:0 0;transform:scaleX(0.9591);">OMG</div>
<div style="left:111px;top:280px;width:44px;height:15px;background:#fff;"></div>
<div style="left:111px;top:280px;width:44px;height:1px;background:#7a7a7a;"></div>
<div style="left:111px;top:280px;width:1px;height:15px;background:#7a7a7a;"></div>
<div style="left:154px;top:280px;width:1px;height:15px;background:#7a7a7a;"></div>
<div style="left:112px;top:294px;width:27px;height:1px;background:#6a6a6a;"></div>
<div style="left:139px;top:294px;width:15px;height:1px;background:#d4d4d4;"></div>
<div style="left:139px;top:281px;width:12px;height:13px;background:#efefef;border:none;border-left:1px solid #a0a0a0;border-right:1px solid #a0a0a0;"></div>
<div style="left:140px;top:289px;width:12px;height:1px;background:#b4b4b4;"></div>
<div style="left:143px;top:284px;width:0;height:0;border-left:3px solid transparent;border-right:3px solid transparent;border-bottom:3px solid #000;"></div>
<div style="left:143px;top:291px;width:0;height:0;border-left:3px solid transparent;border-right:3px solid transparent;border-top:3px solid #000;"></div>
<div class="t" style="left:115.30px;top:282px;font:12px/14px 'Liberation Sans', sans-serif;color:#000;white-space:pre;">1</div>
<div style="left:156px;top:280px;width:44px;height:15px;background:#fff;"></div>
<div style="left:156px;top:280px;width:44px;height:1px;background:#7a7a7a;"></div>
<div style="left:156px;top:280px;width:1px;height:15px;background:#7a7a7a;"></div>
<div style="left:199px;top:280px;width:1px;height:15px;background:#7a7a7a;"></div>
<div style="left:157px;top:294px;width:27px;height:1px;background:#6a6a6a;"></div>
<div style="left:184px;top:294px;width:15px;height:1px;background:#d4d4d4;"></div>
<div style="left:184px;top:281px;width:12px;height:13px;background:#efefef;border:none;border-left:1px solid #a0a0a0;border-right:1px solid #a0a0a0;"></div>
<div style="left:185px;top:289px;width:12px;height:1px;background:#b4b4b4;"></div>
<div style="left:188px;top:284px;width:0;height:0;border-left:3px solid transparent;border-right:3px solid transparent;border-bottom:3px solid #000;"></div>
<div style="left:188px;top:291px;width:0;height:0;border-left:3px solid transparent;border-right:3px solid transparent;border-top:3px solid #000;"></div>
<div class="t" style="left:160.30px;top:282px;font:12px/14px 'Liberation Sans', sans-serif;color:#000;white-space:pre;">10</div>
<div style="left:201px;top:281px;width:11px;height:11px;background:#fff;border:1px solid #333;"></div>
<div style="left:232px;top:280px;width:16px;height:15px;background:#ffffe1;"></div>
<div style="left:257px;top:280px;width:16px;height:15px;background:#000;"></div>
<div class="t" style="left:282.00px;top:281px;font:12px/14px 'Liberation Sans', sans-serif;color:#000;white-space:pre;">Book</div>
<div style="left:64px;top:296px;width:294px;height:15px;background:#f5f5f5;"></div>
<div style="left:228px;top:296px;width:1px;height:15px;background:#fff;"></div>
<div style="left:253px;top:296px;width:1px;height:15px;background:#fff;"></div>
<div style="left:278px;top:296px;width:1px;height:15px;background:#fff;"></div>
<div class="t" style="left:66.20px;top:297px;font:12px/14px 'Liberation Sans', sans-serif;color:#000;white-space:pre;transform-origin:0 0;transform:scaleX(0.8444);">PUR</div>
<div style="left:111px;top:296px;width:44px;height:15px;background:#fff;"></div>
<div style="left:111px;top:296px;width:44px;height:1px;background:#7a7a7a;"></div>
<div style="left:111px;top:296px;width:1px;height:15px;background:#7a7a7a;"></div>
<div style="left:154px;top:296px;width:1px;height:15px;background:#7a7a7a;"></div>
<div style="left:112px;top:310px;width:27px;height:1px;background:#6a6a6a;"></div>
<div style="left:139px;top:310px;width:15px;height:1px;background:#d4d4d4;"></div>
<div style="left:139px;top:297px;width:12px;height:13px;background:#efefef;border:none;border-left:1px solid #a0a0a0;border-right:1px solid #a0a0a0;"></div>
<div style="left:140px;top:305px;width:12px;height:1px;background:#b4b4b4;"></div>
<div style="left:143px;top:300px;width:0;height:0;border-left:3px solid transparent;border-right:3px solid transparent;border-bottom:3px solid #000;"></div>
<div style="left:143px;top:307px;width:0;height:0;border-left:3px solid transparent;border-right:3px solid transparent;border-top:3px solid #000;"></div>
<div class="t" style="left:115.30px;top:298px;font:12px/14px 'Liberation Sans', sans-serif;color:#000;white-space:pre;">1</div>
<div style="left:156px;top:296px;width:44px;height:15px;background:#fff;"></div>
<div style="left:156px;top:296px;width:44px;height:1px;background:#7a7a7a;"></div>
<div style="left:156px;top:296px;width:1px;height:15px;background:#7a7a7a;"></div>
<div style="left:199px;top:296px;width:1px;height:15px;background:#7a7a7a;"></div>
<div style="left:157px;top:310px;width:27px;height:1px;background:#6a6a6a;"></div>
<div style="left:184px;top:310px;width:15px;height:1px;background:#d4d4d4;"></div>
<div style="left:184px;top:297px;width:12px;height:13px;background:#efefef;border:none;border-left:1px solid #a0a0a0;border-right:1px solid #a0a0a0;"></div>
<div style="left:185px;top:305px;width:12px;height:1px;background:#b4b4b4;"></div>
<div style="left:188px;top:300px;width:0;height:0;border-left:3px solid transparent;border-right:3px solid transparent;border-bottom:3px solid #000;"></div>
<div style="left:188px;top:307px;width:0;height:0;border-left:3px solid transparent;border-right:3px solid transparent;border-top:3px solid #000;"></div>
<div class="t" style="left:160.30px;top:298px;font:12px/14px 'Liberation Sans', sans-serif;color:#000;white-space:pre;">10</div>
<div style="left:201px;top:297px;width:11px;height:11px;background:#fff;border:1px solid #333;"></div>
<div style="left:232px;top:296px;width:16px;height:15px;background:#ffffe1;"></div>
<div style="left:257px;top:296px;width:16px;height:15px;background:#000;"></div>
<div class="t" style="left:282.00px;top:297px;font:12px/14px 'Liberation Sans', sans-serif;color:#000;white-space:pre;">Book</div>
<div class="t" style="left:66.20px;top:313px;font:12px/14px 'Liberation Sans', sans-serif;color:#000;white-space:pre;transform-origin:0 0;transform:scaleX(0.9297);">TMXS</div>
<div style="left:111px;top:312px;width:44px;height:15px;background:#fff;"></div>
<div style="left:111px;top:312px;width:44px;height:1px;background:#7a7a7a;"></div>
<div style="left:111px;top:312px;width:1px;height:15px;background:#7a7a7a;"></div>
<div style="left:154px;top:312px;width:1px;height:15px;background:#7a7a7a;"></div>
<div style="left:112px;top:326px;width:27px;height:1px;background:#6a6a6a;"></div>
<div style="left:139px;top:326px;width:15px;height:1px;background:#d4d4d4;"></div>
<div style="left:139px;top:313px;width:12px;height:13px;background:#efefef;border:none;border-left:1px solid #a0a0a0;border-right:1px solid #a0a0a0;"></div>
<div style="left:140px;top:321px;width:12px;height:1px;background:#b4b4b4;"></div>
<div style="left:143px;top:316px;width:0;height:0;border-left:3px solid transparent;border-right:3px solid transparent;border-bottom:3px solid #000;"></div>
<div style="left:143px;top:323px;width:0;height:0;border-left:3px solid transparent;border-right:3px solid transparent;border-top:3px solid #000;"></div>
<div class="t" style="left:115.30px;top:314px;font:12px/14px 'Liberation Sans', sans-serif;color:#000;white-space:pre;">1</div>
<div style="left:156px;top:312px;width:44px;height:15px;background:#fff;"></div>
<div style="left:156px;top:312px;width:44px;height:1px;background:#7a7a7a;"></div>
<div style="left:156px;top:312px;width:1px;height:15px;background:#7a7a7a;"></div>
<div style="left:199px;top:312px;width:1px;height:15px;background:#7a7a7a;"></div>
<div style="left:157px;top:326px;width:27px;height:1px;background:#6a6a6a;"></div>
<div style="left:184px;top:326px;width:15px;height:1px;background:#d4d4d4;"></div>
<div style="left:184px;top:313px;width:12px;height:13px;background:#efefef;border:none;border-left:1px solid #a0a0a0;border-right:1px solid #a0a0a0;"></div>
<div style="left:185px;top:321px;width:12px;height:1px;background:#b4b4b4;"></div>
<div style="left:188px;top:316px;width:0;height:0;border-left:3px solid transparent;border-right:3px solid transparent;border-bottom:3px solid #000;"></div>
<div style="left:188px;top:323px;width:0;height:0;border-left:3px solid transparent;border-right:3px solid transparent;border-top:3px solid #000;"></div>
<div class="t" style="left:160.30px;top:314px;font:12px/14px 'Liberation Sans', sans-serif;color:#000;white-space:pre;">10</div>
<div style="left:201px;top:313px;width:11px;height:11px;background:#fff;border:1px solid #333;"></div>
<div style="left:232px;top:312px;width:16px;height:15px;background:#ffffe1;"></div>
<div style="left:257px;top:312px;width:16px;height:15px;background:#000;"></div>
<div class="t" style="left:282.00px;top:313px;font:12px/14px 'Liberation Sans', sans-serif;color:#000;white-space:pre;">Book</div>
<div style="left:64px;top:328px;width:294px;height:15px;background:#f5f5f5;"></div>
<div style="left:228px;top:328px;width:1px;height:15px;background:#fff;"></div>
<div style="left:253px;top:328px;width:1px;height:15px;background:#fff;"></div>
<div style="left:278px;top:328px;width:1px;height:15px;background:#fff;"></div>
<div class="t" style="left:66.20px;top:329px;font:bold 12px/14px 'Liberation Sans', sans-serif;color:#000;white-space:pre;transform-origin:0 0;transform:scaleX(0.9424);">TSX</div>
<div style="left:111px;top:328px;width:44px;height:15px;background:#fff;"></div>
<div style="left:111px;top:328px;width:44px;height:1px;background:#7a7a7a;"></div>
<div style="left:111px;top:328px;width:1px;height:15px;background:#7a7a7a;"></div>
<div style="left:154px;top:328px;width:1px;height:15px;background:#7a7a7a;"></div>
<div style="left:112px;top:342px;width:27px;height:1px;background:#6a6a6a;"></div>
<div style="left:139px;top:342px;width:15px;height:1px;background:#d4d4d4;"></div>
<div style="left:139px;top:329px;width:12px;height:13px;background:#efefef;border:none;border-left:1px solid #a0a0a0;border-right:1px solid #a0a0a0;"></div>
<div style="left:140px;top:337px;width:12px;height:1px;background:#b4b4b4;"></div>
<div style="left:143px;top:332px;width:0;height:0;border-left:3px solid transparent;border-right:3px solid transparent;border-bottom:3px solid #000;"></div>
<div style="left:143px;top:339px;width:0;height:0;border-left:3px solid transparent;border-right:3px solid transparent;border-top:3px solid #000;"></div>
<div class="t" style="left:115.30px;top:330px;font:12px/14px 'Liberation Sans', sans-serif;color:#000;white-space:pre;">1</div>
<div style="left:156px;top:328px;width:44px;height:15px;background:#fff;"></div>
<div style="left:156px;top:328px;width:44px;height:1px;background:#7a7a7a;"></div>
<div style="left:156px;top:328px;width:1px;height:15px;background:#7a7a7a;"></div>
<div style="left:199px;top:328px;width:1px;height:15px;background:#7a7a7a;"></div>
<div style="left:157px;top:342px;width:27px;height:1px;background:#6a6a6a;"></div>
<div style="left:184px;top:342px;width:15px;height:1px;background:#d4d4d4;"></div>
<div style="left:184px;top:329px;width:12px;height:13px;background:#efefef;border:none;border-left:1px solid #a0a0a0;border-right:1px solid #a0a0a0;"></div>
<div style="left:185px;top:337px;width:12px;height:1px;background:#b4b4b4;"></div>
<div style="left:188px;top:332px;width:0;height:0;border-left:3px solid transparent;border-right:3px solid transparent;border-bottom:3px solid #000;"></div>
<div style="left:188px;top:339px;width:0;height:0;border-left:3px solid transparent;border-right:3px solid transparent;border-top:3px solid #000;"></div>
<div class="t" style="left:160.30px;top:330px;font:12px/14px 'Liberation Sans', sans-serif;color:#000;white-space:pre;">10</div>
<div style="left:201px;top:329px;width:11px;height:11px;background:#fff;border:1px solid #333;"></div>
<div style="left:232px;top:328px;width:16px;height:15px;background:#ffffe1;"></div>
<div style="left:257px;top:328px;width:16px;height:15px;background:#000;"></div>
<div class="t" style="left:282.00px;top:329px;font:12px/14px 'Liberation Sans', sans-serif;color:#000;white-space:pre;">Book</div>
<div class="t" style="left:74.30px;top:89px;font:9.5px/11px 'Liberation Sans', sans-serif;color:#000;white-space:pre;transform-origin:0 0;transform:scaleX(0.9628);">Name</div>
<div class="t" style="left:204.80px;top:89px;font:9.5px/11px 'Liberation Sans', sans-serif;color:#000;white-space:pre;transform-origin:0 0;transform:scaleX(0.9074);">Color</div>
<div class="t" style="left:232.35px;top:89px;font:9.5px/11px 'Liberation Sans', sans-serif;color:#000;white-space:pre;transform-origin:0 0;transform:scaleX(0.8379);">Back</div>
<div class="t" style="left:257.90px;top:89px;font:9.5px/11px 'Liberation Sans', sans-serif;color:#000;white-space:pre;transform-origin:0 0;transform:scaleX(0.8774);">Text</div>
<div class="t" style="left:299.75px;top:89px;font:9.5px/11px 'Liberation Sans', sans-serif;color:#000;white-space:pre;transform-origin:0 0;transform:scaleX(0.8592);">BookType</div>
<div style="left:114.5px;top:86px;width:37.5px;height:16px;overflow:hidden;"><div class="t" style="left:-4px;top:2px;font:9.5px/12px 'Liberation Sans',sans-serif;letter-spacing:-0.15px;">StartDepth</div></div>
<div style="left:159.5px;top:86px;width:37.5px;height:16px;overflow:hidden;"><div class="t" style="left:-4px;top:2px;font:9.5px/12px 'Liberation Sans',sans-serif;letter-spacing:-0.15px;">TotalDepth</div></div>
<div style="left:359px;top:84px;width:17px;height:260px;background:#f0f0f0;"></div>
<div style="left:360px;top:186px;width:15px;height:141px;background:#cdcdcd;"></div>
<svg style="left:359px;top:84px" width="17" height="17" viewBox="0 0 17 17"><path d="M5.45 11.3 L8.6 7.5 L11.75 11.3" stroke="#484848" stroke-width="2" fill="none"/></svg>
<svg style="left:359px;top:327px" width="17" height="17" viewBox="0 0 17 17"><path d="M5.45 6.6 L8.6 10.4 L11.75 6.6" stroke="#484848" stroke-width="2" fill="none"/></svg>
<svg style="left:50px;top:352px" width="220" height="28" viewBox="0 0 220 28">
<path d="M84 8.6 C86 14, 86.5 20.8, 92 20.8 L199 20.8 C203.5 20.8, 204 14, 206.8 8.6 Z" fill="#f0f0f0" stroke="none"/>
<path d="M4.5 6 C5.2 13, 6.5 21.8, 12.5 21.8 L75.5 21.8 C80 21.8, 80 15, 82 8.6" stroke="#000" stroke-width="1.25" fill="none"/>
<path d="M84 8.6 C86 14, 86.5 20.8, 92 20.8 L199 20.8 C203.5 20.8, 204 14, 206.8 8.6" stroke="#111" stroke-width="1.25" fill="none"/>
<rect x="82.5" y="6.5" width="126" height="17" stroke="#ff0000" stroke-width="1" fill="none"/>
</svg>
<div class="t" style="left:65.40px;top:361px;font:11px/13px 'Liberation Sans', sans-serif;color:#000;white-space:pre;transform-origin:0 0;transform:scaleX(0.9346);">Book Colors</div>
<div class="t" style="left:145.00px;top:361px;font:11px/13px 'Liberation Sans', sans-serif;color:#000;white-space:pre;transform-origin:0 0;transform:scaleX(0.9537);">Book Display Options</div>
<div style="left:394px;top:60px;width:159px;height:312px;border:1px solid #dcdcdc;"></div>
<div class="t" style="left:402.50px;top:55px;font:11px/13px 'Liberation Sans', sans-serif;color:#000;white-space:pre;transform-origin:0 0;transform:scaleX(0.9540);background:#fff;padding:0 2px 0 2px;margin-left:-2px;">Price level color bands:</div>
<div style="left:404px;top:74px;width:88px;height:289px;border:1px solid #828790;background:#fff;"></div>
<div style="left:500px;top:74px;width:43px;height:288px;border:1px solid #dcdcdc;"></div>
<div style="left:426px;top:75px;width:1px;height:18px;background:#e5e5e5;"></div>
<div style="left:463px;top:75px;width:1px;height:18px;background:#e5e5e5;"></div>
<div class="t" style="left:436.30px;top:80px;font:9.5px/11px 'Liberation Sans', sans-serif;color:#000;white-space:pre;transform-origin:0 0;transform:scaleX(0.8426);">Back</div>
<div class="t" style="left:474.25px;top:80px;font:9.5px/11px 'Liberation Sans', sans-serif;color:#000;white-space:pre;transform-origin:0 0;transform:scaleX(0.8946);">Text</div>
<div style="left:427px;top:94px;width:36px;height:15px;background:#ffff80;"></div>
<div style="left:464px;top:94px;width:29px;height:15px;background:#000;"></div>
<div style="left:405px;top:94px;width:21px;height:12px;overflow:hidden;"><div class="t" style="left:4px;top:4px;font:10px/12px 'Liberation Sans',sans-serif;letter-spacing:-0.2px;">1</div></div>
<div style="left:427px;top:110px;width:36px;height:15px;background:#ff2020;"></div>
<div style="left:464px;top:110px;width:29px;height:15px;background:#000;"></div>
<div style="left:405px;top:110px;width:21px;height:12px;overflow:hidden;"><div class="t" style="left:4px;top:4px;font:10px/12px 'Liberation Sans',sans-serif;letter-spacing:-0.2px;">2</div></div>
<div style="left:427px;top:126px;width:36px;height:15px;background:#0080ff;"></div>
<div style="left:464px;top:126px;width:29px;height:15px;background:#000;"></div>
<div style="left:405px;top:126px;width:21px;height:12px;overflow:hidden;"><div class="t" style="left:4px;top:4px;font:10px/12px 'Liberation Sans',sans-serif;letter-spacing:-0.2px;">3</div></div>
<div style="left:427px;top:142px;width:36px;height:15px;background:#7854a8;"></div>
<div style="left:464px;top:142px;width:29px;height:15px;background:#000;"></div>
<div style="left:405px;top:142px;width:21px;height:12px;overflow:hidden;"><div class="t" style="left:4px;top:4px;font:10px/12px 'Liberation Sans',sans-serif;letter-spacing:-0.2px;">4</div></div>
<div style="left:427px;top:158px;width:36px;height:15px;background:#0000a0;"></div>
<div style="left:464px;top:158px;width:29px;height:15px;background:#000;"></div>
<div style="left:405px;top:158px;width:21px;height:12px;overflow:hidden;"><div class="t" style="left:4px;top:4px;font:10px/12px 'Liberation Sans',sans-serif;letter-spacing:-0.2px;">5</div></div>
<div style="left:427px;top:174px;width:36px;height:15px;background:#00c020;"></div>
<div style="left:464px;top:174px;width:29px;height:15px;background:#000;"></div>
<div style="left:405px;top:174px;width:21px;height:12px;overflow:hidden;"><div class="t" style="left:4px;top:4px;font:10px/12px 'Liberation Sans',sans-serif;letter-spacing:-0.2px;">6</div></div>
<div style="left:427px;top:190px;width:36px;height:15px;background:#c020c0;"></div>
<div style="left:464px;top:190px;width:29px;height:15px;background:#000;"></div>
<div style="left:405px;top:190px;width:21px;height:12px;overflow:hidden;"><div class="t" style="left:4px;top:4px;font:10px/12px 'Liberation Sans',sans-serif;letter-spacing:-0.2px;">7</div></div>
<div style="left:427px;top:206px;width:36px;height:15px;background:#a8a868;"></div>
<div style="left:464px;top:206px;width:29px;height:15px;background:#000;"></div>
<div style="left:405px;top:206px;width:21px;height:12px;overflow:hidden;"><div class="t" style="left:4px;top:4px;font:10px/12px 'Liberation Sans',sans-serif;letter-spacing:-0.2px;">8</div></div>
<div style="left:427px;top:222px;width:36px;height:15px;background:#60b8a0;"></div>
<div style="left:464px;top:222px;width:29px;height:15px;background:#000;"></div>
<div style="left:405px;top:222px;width:21px;height:12px;overflow:hidden;"><div class="t" style="left:4px;top:4px;font:10px/12px 'Liberation Sans',sans-serif;letter-spacing:-0.2px;">9</div></div>
<div style="left:427px;top:238px;width:36px;height:15px;background:#c09010;"></div>
<div style="left:464px;top:238px;width:29px;height:15px;background:#000;"></div>
<div style="left:405px;top:238px;width:21px;height:12px;overflow:hidden;"><div class="t" style="left:4.6px;top:4px;font:10px/12px 'Liberation Sans',sans-serif;letter-spacing:-0.2px;">10</div></div>
<div style="left:427px;top:254px;width:36px;height:15px;background:#606060;"></div>
<div style="left:464px;top:254px;width:29px;height:15px;background:#000;"></div>
<div style="left:405px;top:254px;width:21px;height:12px;overflow:hidden;"><div class="t" style="left:4.6px;top:4px;font:10px/12px 'Liberation Sans',sans-serif;letter-spacing:-0.2px;">11</div></div>
<div style="left:405px;top:270px;width:22px;height:77px;background:#f0f0f0;"></div>
<div style="left:405px;top:348px;width:88px;height:16px;background:#f0f0f0;"></div>
<div style="left:422px;top:348px;width:48px;height:15px;background:#cdcdcd;"></div>
<svg style="left:405px;top:348px" width="17" height="16" viewBox="0 0 17 16"><path d="M10.5 4.3 L6.1 7.7 L10.5 11.1" stroke="#484848" stroke-width="2" fill="none"/></svg>
<svg style="left:476px;top:348px" width="17" height="16" viewBox="0 0 17 16"><path d="M6.7 4.3 L11.1 7.7 L6.7 11.1" stroke="#484848" stroke-width="2" fill="none"/></svg>
<div style="left:511px;top:158px;width:21px;height:19px;background:#e1e1e1;border:1px solid #adadad;"></div>
<div class="t" style="left:518.80px;top:162px;font:13px/16px 'Liberation Sans', sans-serif;color:#000;white-space:pre;">+</div>
<div style="left:511px;top:260px;width:21px;height:19px;background:#e1e1e1;border:1px solid #adadad;"></div>
<div class="t" style="left:520.80px;top:264px;font:12px/14px 'Liberation Sans', sans-serif;color:#000;white-space:pre;">-</div>
<div style="left:564px;top:60px;width:179px;height:312px;border:1px solid #dcdcdc;"></div>
<div class="t" style="left:572.50px;top:55px;font:11px/13px 'Liberation Sans', sans-serif;color:#000;white-space:pre;transform-origin:0 0;transform:scaleX(0.9834);background:#fff;padding:0 2px 0 2px;margin-left:-2px;">Axes Color Settings:</div>
<div style="left:574px;top:74px;width:108px;height:289px;border:1px solid #828790;background:#fff;"></div>
<div style="left:690px;top:74px;width:43px;height:288px;border:1px solid #dcdcdc;"></div>
<div style="left:613px;top:75px;width:1px;height:18px;background:#e5e5e5;"></div>
<div style="left:650px;top:75px;width:1px;height:18px;background:#e5e5e5;"></div>
<div class="t" style="left:587.45px;top:80px;font:9.5px/11px 'Liberation Sans', sans-serif;color:#000;white-space:pre;transform-origin:0 0;transform:scaleX(0.9282);">Axe</div>
<div class="t" style="left:623.45px;top:80px;font:9.5px/11px 'Liberation Sans', sans-serif;color:#000;white-space:pre;transform-origin:0 0;transform:scaleX(0.8473);">Back</div>
<div class="t" style="left:661.35px;top:80px;font:9.5px/11px 'Liberation Sans', sans-serif;color:#000;white-space:pre;transform-origin:0 0;transform:scaleX(0.8889);">Text</div>
<div style="left:614px;top:94px;width:36px;height:15px;background:#000;"></div>
<div style="left:651px;top:94px;width:32px;height:15px;background:#f0f000;"></div>
<div class="t" style="left:578.00px;top:95px;font:12px/14px 'Liberation Sans', sans-serif;color:#000;white-space:pre;transform-origin:0 0;transform:scaleX(0.8750);">MSCO</div>
<div style="left:576px;top:110px;width:37px;height:15px;background:#f5f5f5;"></div>
<div style="left:614px;top:110px;width:36px;height:15px;background:#000;"></div>
<div style="left:651px;top:110px;width:32px;height:15px;background:#e00000;"></div>
<div class="t" style="left:578.00px;top:111px;font:12px/14px 'Liberation Sans', sans-serif;color:#000;white-space:pre;transform-origin:0 0;transform:scaleX(0.8967);">LEHM</div>
<div style="left:614px;top:126px;width:36px;height:15px;background:#000;"></div>
<div style="left:651px;top:126px;width:32px;height:15px;background:#00d000;"></div>
<div class="t" style="left:578.00px;top:127px;font:12px/14px 'Liberation Sans', sans-serif;color:#000;white-space:pre;transform-origin:0 0;transform:scaleX(0.8624);">BRMS</div>
<div style="left:576px;top:142px;width:37px;height:15px;background:#f5f5f5;"></div>
<div style="left:614px;top:142px;width:36px;height:15px;background:#000;"></div>
<div style="left:651px;top:142px;width:32px;height:15px;background:#ee82ee;"></div>
<div class="t" style="left:578.00px;top:143px;font:12px/14px 'Liberation Sans', sans-serif;color:#000;white-space:pre;transform-origin:0 0;transform:scaleX(0.9057);">GETC</div>
<div style="left:614px;top:158px;width:36px;height:15px;background:#000;"></div>
<div style="left:651px;top:158px;width:32px;height:15px;background:#00ffff;"></div>
<div class="t" style="left:578.40px;top:159px;font:bold 12px/14px 'Liberation Sans', sans-serif;color:#000;white-space:pre;transform-origin:0 0;transform:scaleX(1.0468);">TIMB</div>
<div style="left:576px;top:158px;width:35px;height:13px;border:1px dotted #000;"></div>
<div style="left:575px;top:348px;width:108px;height:16px;background:#f0f0f0;"></div>
<div style="left:592px;top:348px;width:70px;height:15px;background:#cdcdcd;"></div>
<svg style="left:575px;top:348px" width="17" height="16" viewBox="0 0 17 16"><path d="M10.5 4.3 L6.1 7.7 L10.5 11.1" stroke="#484848" stroke-width="2" fill="none"/></svg>
<svg style="left:666px;top:348px" width="17" height="16" viewBox="0 0 17 16"><path d="M6.7 4.3 L11.1 7.7 L6.7 11.1" stroke="#484848" stroke-width="2" fill="none"/></svg>
<div style="left:701px;top:132px;width:19px;height:17px;background:#e1e1e1;border:2px solid #0078d7;"></div>
<div class="t" style="left:708.80px;top:136px;font:13px/16px 'Liberation Sans', sans-serif;color:#000;white-space:pre;">+</div>
<div style="left:701px;top:208px;width:21px;height:19px;background:#e1e1e1;border:1px solid #adadad;"></div>
<div class="t" style="left:710.80px;top:212px;font:12px/14px 'Liberation Sans', sans-serif;color:#000;white-space:pre;">-</div>
<div style="left:701px;top:284px;width:21px;height:19px;background:#e1e1e1;border:1px solid #adadad;"></div>
<div class="t" style="left:709.80px;top:288px;font:12px/14px 'Liberation Sans', sans-serif;color:#000;white-space:pre;">x</div>
<div style="left:54px;top:387px;width:289px;height:72px;border:1px solid #dcdcdc;"></div>
<div class="t" style="left:62.50px;top:382px;font:11px/13px 'Liberation Sans', sans-serif;color:#000;white-space:pre;transform-origin:0 0;transform:scaleX(1.0059);background:#fff;padding:0 2px;margin-left:-2px;">Other options:</div>
<div style="left:62px;top:404px;width:11px;height:11px;background:#fff;border:1px solid #333;"></div>
<div class="t" style="left:79.40px;top:406px;font:11px/13px 'Liberation Sans', sans-serif;color:#000;white-space:pre;transform-origin:0 0;transform:scaleX(0.9933);">Suggest  text color</div>
<div class="t" style="left:209.60px;top:417px;font:11px/13px 'Liberation Sans', sans-serif;color:#000;white-space:pre;transform-origin:0 0;transform:scaleX(0.9424);">Header</div>
<div class="t" style="left:268.40px;top:397px;font:11px/13px 'Liberation Sans', sans-serif;color:#000;white-space:pre;transform-origin:0 0;transform:scaleX(0.8991);">Back</div>
<div class="t" style="left:309.30px;top:397px;font:11px/13px 'Liberation Sans', sans-serif;color:#000;white-space:pre;transform-origin:0 0;transform:scaleX(1.0551);">Text</div>
<div style="left:264px;top:411.5px;width:32px;height:19px;background:#d3d3d3;"></div>
<div style="left:264px;top:429.5px;width:32px;height:1px;background:#a0a0a0;"></div>
<div style="left:295px;top:411.5px;width:1px;height:19px;background:#a0a0a0;"></div>
<div style="left:304px;top:411.5px;width:32px;height:19px;background:#000;"></div>
<div style="left:304px;top:429.5px;width:32px;height:1px;background:#a0a0a0;"></div>
<div style="left:335px;top:411.5px;width:1px;height:19px;background:#a0a0a0;"></div>
<div class="t" style="left:61.70px;top:443px;font:11px/13px 'Liberation Sans', sans-serif;color:#000;white-space:pre;transform-origin:0 0;transform:scaleX(0.9210);">Grid line color</div>
<div style="left:148px;top:437.6px;width:32px;height:19px;background:#d2691e;"></div>
<div style="left:148px;top:455.6px;width:32px;height:1px;background:#a0a0a0;"></div>
<div style="left:179px;top:437.6px;width:1px;height:19px;background:#a0a0a0;"></div>
<div class="t" style="left:184.30px;top:443px;font:11px/13px 'Liberation Sans', sans-serif;color:#000;white-space:pre;transform-origin:0 0;transform:scaleX(0.9486);">Background</div>
<div style="left:264px;top:437.6px;width:32px;height:19px;background:#808080;"></div>
<div style="left:264px;top:455.6px;width:32px;height:1px;background:#a0a0a0;"></div>
<div style="left:295px;top:437.6px;width:1px;height:19px;background:#a0a0a0;"></div>
<div style="left:355px;top:387px;width:178px;height:72px;border:1px solid #dcdcdc;"></div>
<div class="t" style="left:362.60px;top:382px;font:11px/13px 'Liberation Sans', sans-serif;color:#000;white-space:pre;transform-origin:0 0;transform:scaleX(0.9679);background:#fff;padding:0 2px;margin-left:-2px;">Level one colors:</div>
<div class="t" style="left:438.00px;top:397px;font:11px/13px 'Liberation Sans', sans-serif;color:#000;white-space:pre;transform-origin:0 0;transform:scaleX(0.9155);">Back</div>
<div class="t" style="left:478.30px;top:397px;font:11px/13px 'Liberation Sans', sans-serif;color:#000;white-space:pre;transform-origin:0 0;transform:scaleX(1.0898);">Text</div>
<div class="t" style="left:363.20px;top:417px;font:11px/13px 'Liberation Sans', sans-serif;color:#000;white-space:pre;transform-origin:0 0;transform:scaleX(0.9540);">Up Tick</div>
<div class="t" style="left:363.20px;top:443px;font:11px/13px 'Liberation Sans', sans-serif;color:#000;white-space:pre;transform-origin:0 0;transform:scaleX(0.9557);">Down Tick</div>
<div style="left:434px;top:411.5px;width:32px;height:19px;background:#008000;"></div>
<div style="left:434px;top:429.5px;width:32px;height:1px;background:#a0a0a0;"></div>
<div style="left:465px;top:411.5px;width:1px;height:19px;background:#a0a0a0;"></div>
<div style="left:474px;top:411.5px;width:32px;height:19px;background:#000;"></div>
<div style="left:474px;top:429.5px;width:32px;height:1px;background:#a0a0a0;"></div>
<div style="left:505px;top:411.5px;width:1px;height:19px;background:#a0a0a0;"></div>
<div style="left:434px;top:437.6px;width:32px;height:19px;background:#ff0000;"></div>
<div style="left:434px;top:455.6px;width:32px;height:1px;background:#a0a0a0;"></div>
<div style="left:465px;top:437.6px;width:1px;height:19px;background:#a0a0a0;"></div>
<div style="left:474px;top:437.6px;width:32px;height:19px;background:#000;"></div>
<div style="left:474px;top:455.6px;width:32px;height:1px;background:#a0a0a0;"></div>
<div style="left:505px;top:437.6px;width:1px;height:19px;background:#a0a0a0;"></div>
<div style="left:544px;top:387px;width:199px;height:72px;border:1px solid #dcdcdc;"></div>
<div class="t" style="left:552.50px;top:382px;font:11px/13px 'Liberation Sans', sans-serif;color:#000;white-space:pre;transform-origin:0 0;transform:scaleX(0.9700);background:#fff;padding:0 2px;margin-left:-2px;">Order Highlighting</div>
<div style="left:554px;top:405px;width:11px;height:11px;background:#fff;border:1px solid #333;"></div>
<div class="t" style="left:570.80px;top:406px;font:11px/13px 'Liberation Sans', sans-serif;color:#000;white-space:pre;transform-origin:0 0;transform:scaleX(0.9844);">Highlight accepted orders</div>
<div class="t" style="left:628.50px;top:423px;font:11px/13px 'Liberation Sans', sans-serif;color:#000;white-space:pre;transform-origin:0 0;transform:scaleX(0.9400);">Back</div>
<div class="t" style="left:668.00px;top:423px;font:11px/13px 'Liberation Sans', sans-serif;color:#000;white-space:pre;transform-origin:0 0;transform:scaleX(1.0650);">Text</div>
<div class="t" style="left:553.30px;top:443px;font:11px/13px 'Liberation Sans', sans-serif;color:#000;white-space:pre;transform-origin:0 0;transform:scaleX(0.9758);">Order color</div>
<div style="left:624px;top:437.8px;width:32px;height:19px;background:#000;"></div>
<div style="left:624px;top:455.8px;width:32px;height:1px;background:#a0a0a0;"></div>
<div style="left:655px;top:437.8px;width:1px;height:19px;background:#a0a0a0;"></div>
<div style="left:664px;top:437.8px;width:32px;height:19px;background:#fff;"></div>
<div style="left:664px;top:455.8px;width:32px;height:1px;background:#a0a0a0;"></div>
<div style="left:695px;top:437.8px;width:1px;height:19px;background:#a0a0a0;"></div>
<div style="left:32px;top:482px;width:729px;height:68px;border:1px solid #dcdcdc;"></div>
<div style="left:373px;top:493px;width:112px;height:19px;background:#e1e1e1;border:1px solid #adadad;"></div>
<div class="t" style="left:398.65px;top:498px;font:11px/13px 'Liberation Sans', sans-serif;color:#000;white-space:pre;transform-origin:0 0;transform:scaleX(0.9825);">Load Default</div>
<div style="left:501px;top:493px;width:111px;height:19px;background:#e1e1e1;border:1px solid #adadad;"></div>
<div class="t" style="left:518.30px;top:498px;font:11px/13px 'Liberation Sans', sans-serif;color:#000;white-space:pre;transform-origin:0 0;transform:scaleX(0.9915);">Save as Default</div>
<div style="left:628px;top:493px;width:112px;height:19px;background:#e1e1e1;border:1px solid #adadad;"></div>
<div class="t" style="left:671.05px;top:498px;font:11px/13px 'Liberation Sans', sans-serif;color:#000;white-space:pre;transform-origin:0 0;transform:scaleX(0.9625);">Apply</div>
<div style="left:501px;top:528px;width:111px;height:19px;background:#e1e1e1;border:1px solid #adadad;"></div>
<div class="t" style="left:549.80px;top:533px;font:11px/13px 'Liberation Sans', sans-serif;color:#000;white-space:pre;transform-origin:0 0;transform:scaleX(0.8802);">OK</div>
<div style="left:628px;top:528px;width:112px;height:19px;background:#e1e1e1;border:1px solid #adadad;"></div>
<div class="t" style="left:668.05px;top:533px;font:11px/13px 'Liberation Sans', sans-serif;color:#000;white-space:pre;transform-origin:0 0;transform:scaleX(0.9489);">Cancel</div>
</body></html>
